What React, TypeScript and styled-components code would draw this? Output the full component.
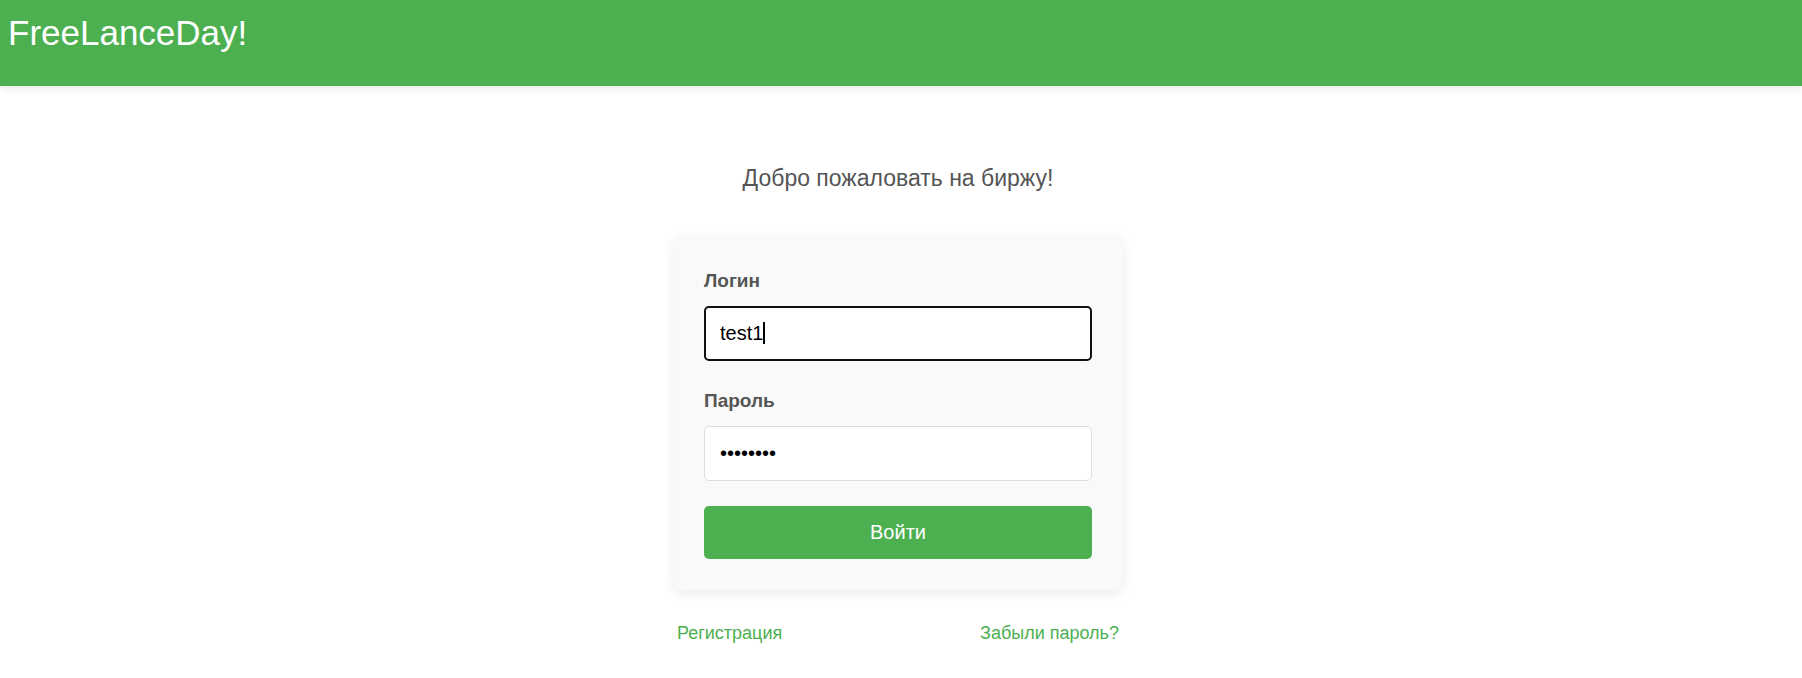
import React, { useLayoutEffect, useState } from "react";
import styled, { createGlobalStyle } from "styled-components";

const GlobalStyle = createGlobalStyle`
  *, *::before, *::after { box-sizing: border-box; }
  body {
    margin: 0;
    background: #fff;
    color: #555;
    font-family: Arial, "Liberation Sans", sans-serif;
  }
`;

const Header = styled.header`
  padding: 13px 8px 33px;
  background: #4caf50;
  box-shadow: 0 2px 8px rgba(0, 0, 0, 0.1);
`;

const Brand = styled.h1`
  margin: 0;
  color: #fff;
  font-size: 35px;
  font-weight: 400;
  line-height: 40px;
`;

const Main = styled.main`
  display: flex;
  flex-direction: column;
  align-items: center;
  padding: 76px 16px 32px 10px;
`;

const Welcome = styled.p`
  margin: 0 0 40px;
  font-size: 23px;
  line-height: 32px;
  text-align: center;
`;

const Card = styled.form`
  display: flex;
  flex-direction: column;
  gap: 25px;
  width: 100%;
  max-width: 450px;
  padding: 32px 31px 31px;
  border-radius: 10px;
  background: #f9f9f9;
  box-shadow: 0 4px 12px rgba(0, 0, 0, 0.08);
`;

const Field = styled.div`
  display: flex;
  flex-direction: column;
  gap: 10px;
`;

const Label = styled.label`
  font-size: 19px;
  font-weight: 700;
  line-height: 30px;
`;

const InputFrame = styled.div`
  position: relative;
`;

const Caret = styled.span`
  position: absolute;
  top: 16px;
  display: none;
  width: 2px;
  height: 22px;
  background: #000;
  pointer-events: none;
`;

const Input = styled.input`
  display: block;
  width: 100%;
  height: 55px;
  padding: 0 15px;
  border: 1px solid #ddd;
  border-radius: 5px;
  background: #fff;
  color: #000;
  font-family: inherit;
  font-size: 20px;

  &:focus {
    outline: 2px solid #101010;
    outline-offset: -2px;
  }
`;

const LoginInput = styled(Input)`
  caret-color: transparent;

  &:focus + ${Caret} {
    display: block;
  }
`;

const SubmitButton = styled.button`
  height: 53px;
  border: 0;
  border-radius: 5px;
  background: #4caf50;
  color: #fff;
  font-family: inherit;
  font-size: 20px;
  cursor: pointer;
`;

const Links = styled.nav`
  display: flex;
  justify-content: space-between;
  width: 100%;
  max-width: 450px;
  padding: 31px 4px 0;
`;

const TextLink = styled.a`
  color: #4caf50;
  font-size: 18px;
  line-height: 24px;
  text-decoration: none;
`;

const INPUT_INSET = 16;

function measureText(text: string): number {
  const context = document.createElement("canvas").getContext("2d");
  if (!context) return 0;
  context.font = '20px Arial, "Liberation Sans", sans-serif';
  return Math.round(context.measureText(text).width);
}

export default function App() {
  const [login, setLogin] = useState("test1");
  const [password, setPassword] = useState("password");
  const [caretAt, setCaretAt] = useState(login.length);
  const [caretLeft, setCaretLeft] = useState(INPUT_INSET);

  useLayoutEffect(() => {
    setCaretLeft(INPUT_INSET + measureText(login.slice(0, caretAt)));
  }, [login, caretAt]);

  return (
    <>
      <GlobalStyle />
      <Header>
        <Brand>FreeLanceDay!</Brand>
      </Header>
      <Main>
        <Welcome>Добро пожаловать на биржу!</Welcome>
        <Card onSubmit={(event) => event.preventDefault()}>
          <Field>
            <Label htmlFor="login">Логин</Label>
            <InputFrame>
              <LoginInput
                id="login"
                type="text"
                autoFocus
                value={login}
                onFocus={(event) => event.target.setSelectionRange(login.length, login.length)}
                onSelect={(event) => setCaretAt(event.currentTarget.selectionEnd ?? login.length)}
                onChange={(event) => setLogin(event.target.value)}
              />
              <Caret aria-hidden="true" style={{ left: caretLeft }} />
            </InputFrame>
          </Field>
          <Field>
            <Label htmlFor="password">Пароль</Label>
            <Input
              id="password"
              type="password"
              value={password}
              onChange={(event) => setPassword(event.target.value)}
            />
          </Field>
          <SubmitButton type="submit">Войти</SubmitButton>
        </Card>
        <Links>
          <TextLink href="#register">Регистрация</TextLink>
          <TextLink href="#forgot">Забыли пароль?</TextLink>
        </Links>
      </Main>
    </>
  );
}
